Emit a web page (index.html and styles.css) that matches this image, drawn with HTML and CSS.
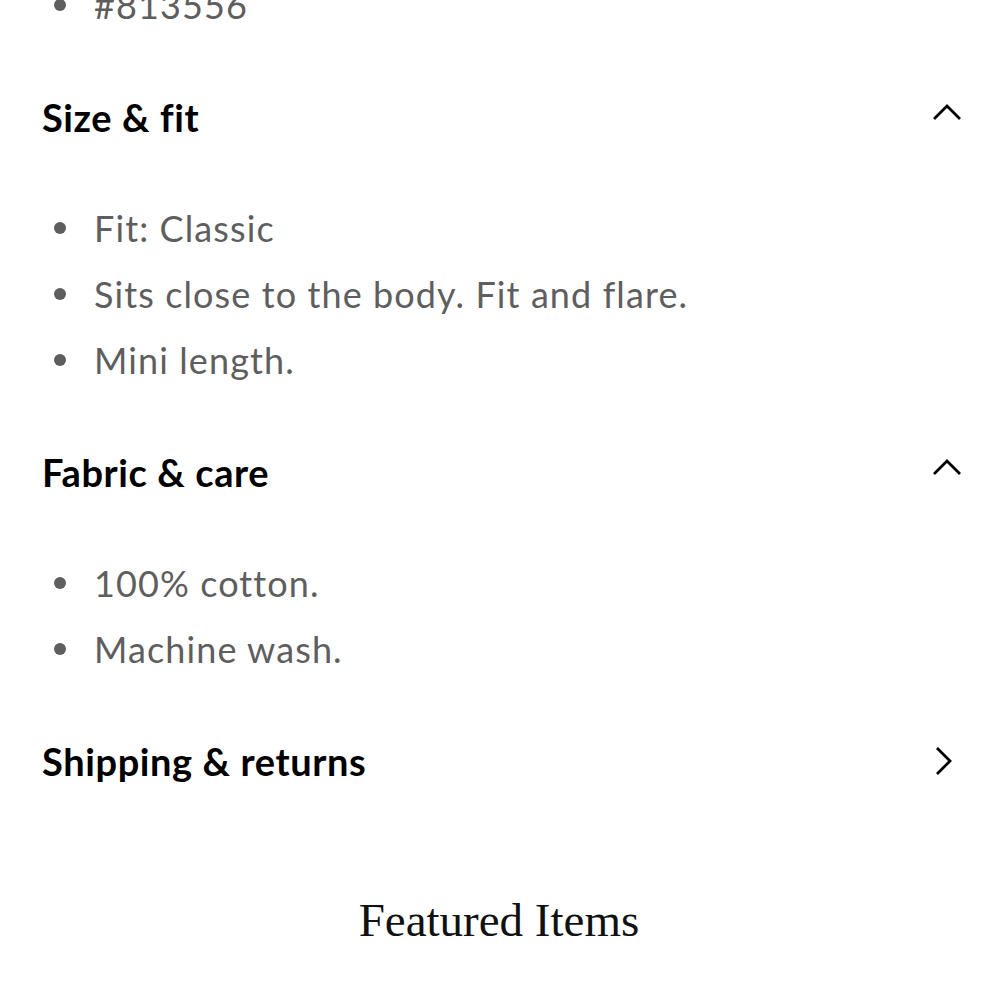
FILE: index.html
```html
<!DOCTYPE html>
<html lang="en">
<head>
    <meta charset="UTF-8">
    <meta name="viewport" content="width=device-width, initial-scale=1.0">
    <title>Product details</title>
    <link rel="stylesheet" href="styles.css">
</head>
<body>
    <div class="details">
        <ul class="bullets bullets-top">
            <li>#813556</li>
        </ul>

        <div class="section-head">
            <h2>Size &amp; fit</h2>
            <svg class="chevron" width="30" height="20" viewBox="0 0 30 20">
                <polyline points="2,17 15,4 28,17" fill="none" stroke="#000" stroke-width="2.8"/>
            </svg>
        </div>
        <ul class="bullets">
            <li>Fit: Classic</li>
            <li>Sits close to the body. Fit and flare.</li>
            <li>Mini length.</li>
        </ul>

        <div class="section-head">
            <h2>Fabric &amp; care</h2>
            <svg class="chevron" width="30" height="20" viewBox="0 0 30 20">
                <polyline points="2,17 15,4 28,17" fill="none" stroke="#000" stroke-width="2.8"/>
            </svg>
        </div>
        <ul class="bullets">
            <li>100% cotton.</li>
            <li>Machine wash.</li>
        </ul>

        <div class="section-head">
            <h2>Shipping &amp; returns</h2>
            <svg class="chevron chevron-right" width="20" height="30" viewBox="0 0 20 30">
                <polyline points="3,2 16,15 3,28" fill="none" stroke="#000" stroke-width="2.8"/>
            </svg>
        </div>

        <h3 class="featured">Featured Items</h3>
    </div>
</body>
</html>
```

FILE: styles.css
```css
body {
    margin: 0;
    background-color: #ffffff;
    font-family: 'Lato', 'Open Sans', sans-serif;
    color: #000000;
}
.details {
    padding: 0 38px 0 42px;
    margin-top: -28px;
}
.section-head {
    display: flex;
    justify-content: space-between;
    align-items: center;
    height: 40px;
    margin-top: 59px;
}
.section-head h2 {
    margin: 0;
    font-size: 38px;
    font-weight: 700;
    letter-spacing: 0.6px;
}
.chevron {
    margin-top: -10px;
}
.chevron-right {
    margin-right: 8px;
    margin-top: 0;
}
.bullets {
    list-style: none;
    margin: 58px 0 0;
    padding: 0;
}
.bullets-top {
    margin-top: 0;
}
.bullets li {
    position: relative;
    height: 66px;
    line-height: 66px;
    padding-left: 52px;
    font-size: 36px;
    color: #5e5e5e;
    letter-spacing: 1.1px;
}
.bullets li::before {
    content: "";
    position: absolute;
    left: 12px;
    top: 27px;
    width: 12px;
    height: 12px;
    border-radius: 50%;
    background-color: #5e5e5e;
}
.featured {
    margin: 112px 0 0 -6px;
    text-align: center;
    font-family: 'Liberation Serif', serif;
    font-weight: 400;
    font-size: 47px;
    color: #111111;
}
```
